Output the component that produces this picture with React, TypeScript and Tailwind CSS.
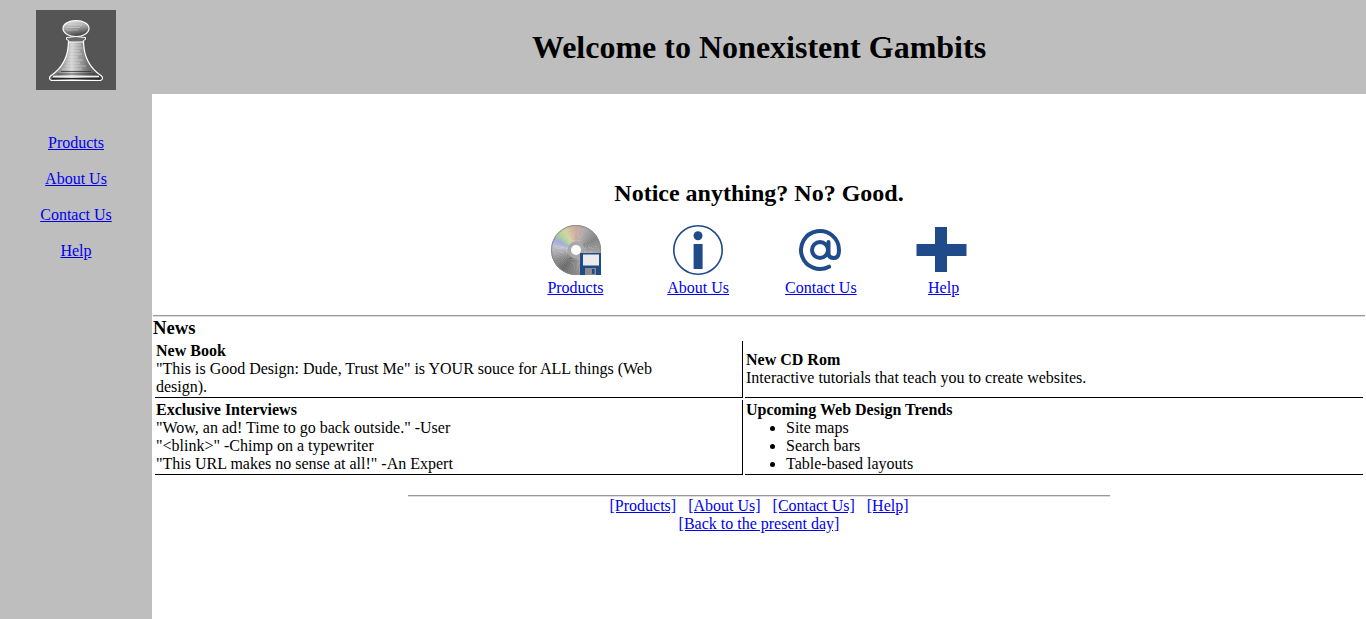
const stops: [number, number[]][] = [
  [0, [205, 170, 160]],
  [25, [170, 170, 170]],
  [60, [130, 130, 130]],
  [95, [160, 160, 160]],
  [130, [195, 195, 195]],
  [180, [140, 140, 140]],
  [215, [105, 105, 105]],
  [250, [150, 150, 150]],
  [280, [195, 195, 205]],
  [295, [165, 165, 225]],
  [312, [165, 210, 150]],
  [330, [215, 210, 160]],
  [360, [205, 170, 160]],
];

const colorAt = (deg: number) => {
  for (let i = 0; i < stops.length - 1; i++) {
    const [a, ca] = stops[i];
    const [b, cb] = stops[i + 1];
    if (deg >= a && deg <= b) {
      const t = (deg - a) / (b - a);
      const c = ca.map((v, k) => Math.round(v + (cb[k] - v) * t));
      return `rgb(${c[0]},${c[1]},${c[2]})`;
    }
  }
  return "#aaa";
};

// disc sheen: thin wedges, angle measured clockwise from the top
const wedges = Array.from({ length: 72 }, (_, i) => {
  const a0 = ((i * 5 - 0.5) * Math.PI) / 180;
  const a1 = (((i + 1) * 5 + 0.5) * Math.PI) / 180;
  const r = 25;
  const d = `M25 25L${25 + r * Math.sin(a0)} ${25 - r * Math.cos(a0)}L${25 + r * Math.sin(a1)} ${25 - r * Math.cos(a1)}Z`;
  return { d, fill: colorAt(i * 5 + 2.5) };
});

const PawnLogo = () => (
  <svg width="80" height="80" viewBox="0 0 80 80" className="block">
    <defs>
      <linearGradient id="pawnHead" x1="0.2" y1="0" x2="0.5" y2="1">
        <stop offset="0" stopColor="#e8e8e8" />
        <stop offset="0.5" stopColor="#a0a0a0" />
        <stop offset="1" stopColor="#3c3c3c" />
      </linearGradient>
      <linearGradient id="pawnBody" x1="0" y1="0" x2="1" y2="0">
        <stop offset="0" stopColor="#555" />
        <stop offset="0.42" stopColor="#d2d2d2" />
        <stop offset="0.7" stopColor="#777" />
        <stop offset="1" stopColor="#333" />
      </linearGradient>
    </defs>
    <rect width="80" height="80" fill="#555555" />
    {/* body, concave flare down to the base */}
    <path
      d="M32.5 31 C32.5 45 28 57 14.5 66 Q12 69 15.5 70.5 L64.5 70.5 Q68 69 65.5 66 C52 57 47.5 45 47.5 31 Z"
      fill="url(#pawnBody)"
      stroke="#ffffff"
      strokeWidth="1.2"
    />
    {/* etched hatching */}
    <path
      d="M35 35 H45 M35 38 H46 M34.5 41 H44 M34 44 H46 M33 47 H42 M32 50 H47 M31 53 H44 M29 56 H50 M26 59 H46"
      stroke="#f4f4f4"
      strokeWidth="0.7"
      opacity="0.6"
    />
    <path d="M25 61.5 H55 M21 64 H59" stroke="#2e2e2e" strokeWidth="0.9" opacity="0.8" />
    <path d="M17 66.5 H63" stroke="#efefef" strokeWidth="1.4" />
    <path d="M16 68.6 H64" stroke="#262626" strokeWidth="1.4" />
    <path
      d="M30.5 27.5 Q40 25.5 49.5 27.5 L49.5 29.5 Q47 30 47 32 L33 32 Q33 30 30.5 29.5 Z"
      fill="#6a6a6a"
      stroke="#ffffff"
      strokeWidth="1"
    />
    <ellipse cx="40" cy="18.5" rx="13" ry="8" fill="url(#pawnHead)" stroke="#ffffff" strokeWidth="1.2" />
    <path d="M32 15 H46 M31 17.5 H44 M31 20 H42" stroke="#f4f4f4" strokeWidth="0.6" opacity="0.55" />
  </svg>
);

const CdIcon = () => (
  <svg width="50" height="50" viewBox="-1 0 50 50" className="block overflow-visible">
    {wedges.map((w, i) => (
      <path key={i} d={w.d} fill={w.fill} />
    ))}
    <circle cx="25" cy="25" r="24.5" fill="none" stroke="#8a8a8a" strokeWidth="1" />
    <circle cx="25" cy="25" r="8.5" fill="#a8a8a8" />
    <circle cx="25" cy="25" r="5" fill="#ffffff" />
    <rect x="29" y="28" width="21" height="22" fill="#1f4b8a" />
    <rect x="32" y="29.5" width="16" height="11" fill="#ebebeb" />
    <rect x="34" y="43" width="11" height="7" fill="#8c8c8c" />
    <rect x="41" y="44" width="2.5" height="5" fill="#1f4b8a" />
  </svg>
);

const InfoIcon = () => (
  <svg width="50" height="50" viewBox="0 0 50 50" className="block">
    <circle cx="25" cy="25" r="24.2" fill="none" stroke="#1f4b8a" strokeWidth="1.6" />
    <circle cx="25" cy="10.7" r="4.5" fill="#1f4b8a" />
    <rect x="20.6" y="19" width="9" height="25" fill="#1f4b8a" />
  </svg>
);

const AtIcon = () => (
  <svg width="50" height="50" viewBox="0 0 50 50" className="block">
    <g fill="none" stroke="#1f4b8a" strokeWidth="4" strokeLinecap="round">
      <circle cx="24" cy="25" r="8" />
      <path d="M32.5 17 V28 Q32.5 33 38 33 Q43 33 43 25 A19 19 0 1 0 33 41.7" />
    </g>
  </svg>
);

const PlusIcon = () => (
  <svg width="50" height="50" viewBox="0 0 50 50" className="block overflow-visible">
    <path d="M16 2 H28 V19 H47.5 V31 H28 V47 H16 V31 H-2.5 V19 H16 Z" fill="#1f4b8a" />
  </svg>
);

const iconLinks = [
  { label: "Products", icon: <CdIcon /> },
  { label: "About Us", icon: <InfoIcon /> },
  { label: "Contact Us", icon: <AtIcon /> },
  { label: "Help", icon: <PlusIcon /> },
];

const navLinks = ["Products", "About Us", "Contact Us", "Help"];

const linkClass = "text-[#0000ee] underline";

export default function App() {
  return (
    <div className="flex min-h-[619px] bg-white font-['Liberation_Serif',serif] text-base leading-[18px] text-black">
      <aside className="w-[152px] shrink-0 bg-[#bebebe]">
        <div className="flex justify-center pt-[10px]">
          <PawnLogo />
        </div>
        <nav className="mt-[44px] flex flex-col items-center gap-[18px]">
          {navLinks.map((l) => (
            <a key={l} href="#" className={linkClass}>
              {l}
            </a>
          ))}
        </nav>
      </aside>

      <div className="min-w-0 flex-1">
        <header className="flex h-[94px] items-center justify-center bg-[#bebebe]">
          <h1 className="text-[32px] leading-[37px] font-bold">Welcome to Nonexistent Gambits</h1>
        </header>

        <main className="px-px">
          <h2 className="pt-[86px] text-center text-2xl leading-[27px] font-bold">Notice anything? No? Good.</h2>

          <div className="mx-auto mt-[18px] grid w-[492px] grid-cols-4 pl-px">
            {iconLinks.map((item) => (
              <div key={item.label} className="flex flex-col items-center gap-[4px]">
                {item.icon}
                <a href="#" className={linkClass}>
                  {item.label}
                </a>
              </div>
            ))}
          </div>

          <hr className="mt-[18px] h-[2px] border-0 border-t border-b border-t-[#999999] border-b-[#dddddd]" />

          <h3 className="text-[18.72px] leading-[22px] font-bold">News</h3>

          <table className="w-full border-separate border-spacing-[2px]">
            <tbody>
              <tr>
                <td className="w-[588px] border-r border-b border-black p-px">
                  <b>New Book</b>
                  <br />
                  "This is Good Design: Dude, Trust Me" is YOUR souce for ALL things (Web
                  <br />
                  design).
                </td>
                <td className="border-b border-black p-px">
                  <b>New CD Rom</b>
                  <br />
                  Interactive tutorials that teach you to create websites.
                </td>
              </tr>
              <tr>
                <td className="border-r border-b border-black p-px">
                  <b>Exclusive Interviews</b>
                  <br />
                  "Wow, an ad! Time to go back outside." -User
                  <br />
                  "&lt;blink&gt;" -Chimp on a typewriter
                  <br />
                  "This URL makes no sense at all!" -An Expert
                </td>
                <td className="border-b border-black p-px">
                  <b>Upcoming Web Design Trends</b>
                  <ul className="list-disc pl-10">
                    <li>Site maps</li>
                    <li>Search bars</li>
                    <li>Table-based layouts</li>
                  </ul>
                </td>
              </tr>
            </tbody>
          </table>

          <hr className="mx-auto mt-[18px] h-[2px] w-[702px] border-0 border-t border-b border-t-[#999999] border-b-[#dddddd]" />

          <div className="text-center">
            <a href="#" className={linkClass}>[Products]</a>
            {"\u00a0\u00a0\u00a0"}
            <a href="#" className={linkClass}>[About Us]</a>
            {"\u00a0\u00a0\u00a0"}
            <a href="#" className={linkClass}>[Contact Us]</a>
            {"\u00a0\u00a0\u00a0"}
            <a href="#" className={linkClass}>[Help]</a>
            <br />
            <a href="#" className={linkClass}>[Back to the present day]</a>
          </div>
        </main>
      </div>
    </div>
  );
}
